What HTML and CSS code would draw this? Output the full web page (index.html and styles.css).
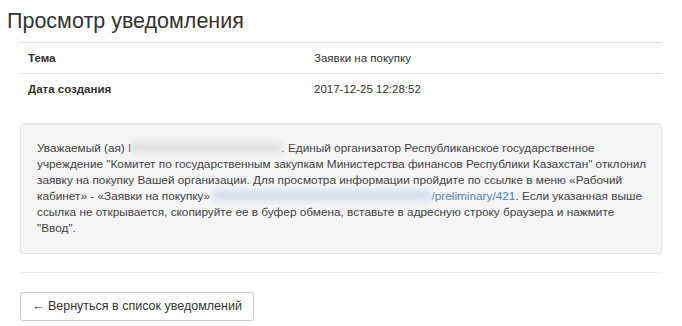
FILE: index.html
```html
<!DOCTYPE html>
<html lang="ru">
<head>
<meta charset="UTF-8">
<title>Просмотр уведомления</title>
<link rel="stylesheet" href="styles.css">
</head>
<body>

<h1>Просмотр уведомления</h1>

<div class="content">
<table class="info">
  <tr>
    <th>Тема</th>
    <td>Заявки на покупку</td>
  </tr>
  <tr>
    <th>Дата создания</th>
    <td>2017-12-25 12:28:52</td>
  </tr>
</table>

<div class="well">
Уважаемый (ая) I<span class="hidden-name"></span>. Единый организатор Республиканское государственное<br>
учреждение "Комитет по государственным закупкам Министерства финансов Республики Казахстан" отклонил<br>
заявку на покупку Вашей организации. Для просмотра информации пройдите по ссылке в меню «Рабочий<br>
кабинет» - «Заявки на покупку» <a href="#"><span class="hidden-link"></span>/preliminary/421</a>. Если указанная выше<br>
ссылка не открывается, скопируйте ее в буфер обмена, вставьте в адресную строку браузера и нажмите<br>
"Ввод".
</div>

<hr>

<button type="button">&larr; Вернуться в список уведомлений</button>
</div>

</body>
</html>
```

FILE: styles.css
```css
body {
    font-family: "Liberation Sans", Arial, sans-serif;
    font-size: 11.5px;
    color: #333;
    margin: 0;
    padding: 0 20px 0 7px;
}
h1 {
    font-weight: normal;
    font-size: 21.5px;
    margin: 9px 0 9px 0;
    line-height: 24px;
}
.content {
    margin-left: 13px;
}
.info {
    width: 100%;
    border-collapse: collapse;
}
.info th,
.info td {
    text-align: left;
    border-top: 1px solid #e2e2e2;
    padding: 7px 8px;
    height: 16px;
    line-height: 16px;
}
.info th {
    width: 270px;
}
.well {
    margin-top: 19px;
    background: #f5f5f5;
    border: 1px solid #e6e6e6;
    border-radius: 3px;
    padding: 16px 16px 17px 16px;
    font-size: 11.8px;
    line-height: 16px;
    color: #444;
    white-space: nowrap;
    box-shadow: inset 0 1px 1px rgba(0, 0, 0, 0.04);
}
.well a {
    color: #4f86c0;
    text-decoration: none;
}
.hidden-name {
    display: inline-block;
    width: 150px;
    height: 11px;
    vertical-align: -1px;
    background: #e0e0e0;
    filter: blur(3px);
}
.hidden-link {
    display: inline-block;
    width: 218px;
    height: 11px;
    vertical-align: -1px;
    background: #d3e0ee;
    filter: blur(3px);
}
hr {
    border: 0;
    border-top: 1px solid #eee;
    margin: 18px 0 19px 0;
}
button {
    font-family: "Liberation Sans", Arial, sans-serif;
    font-size: 12.5px;
    color: #333;
    background: #fff;
    border: 1px solid #ccc;
    border-radius: 3px;
    padding: 6px 11px;
    line-height: 15px;
    cursor: pointer;
}
```
